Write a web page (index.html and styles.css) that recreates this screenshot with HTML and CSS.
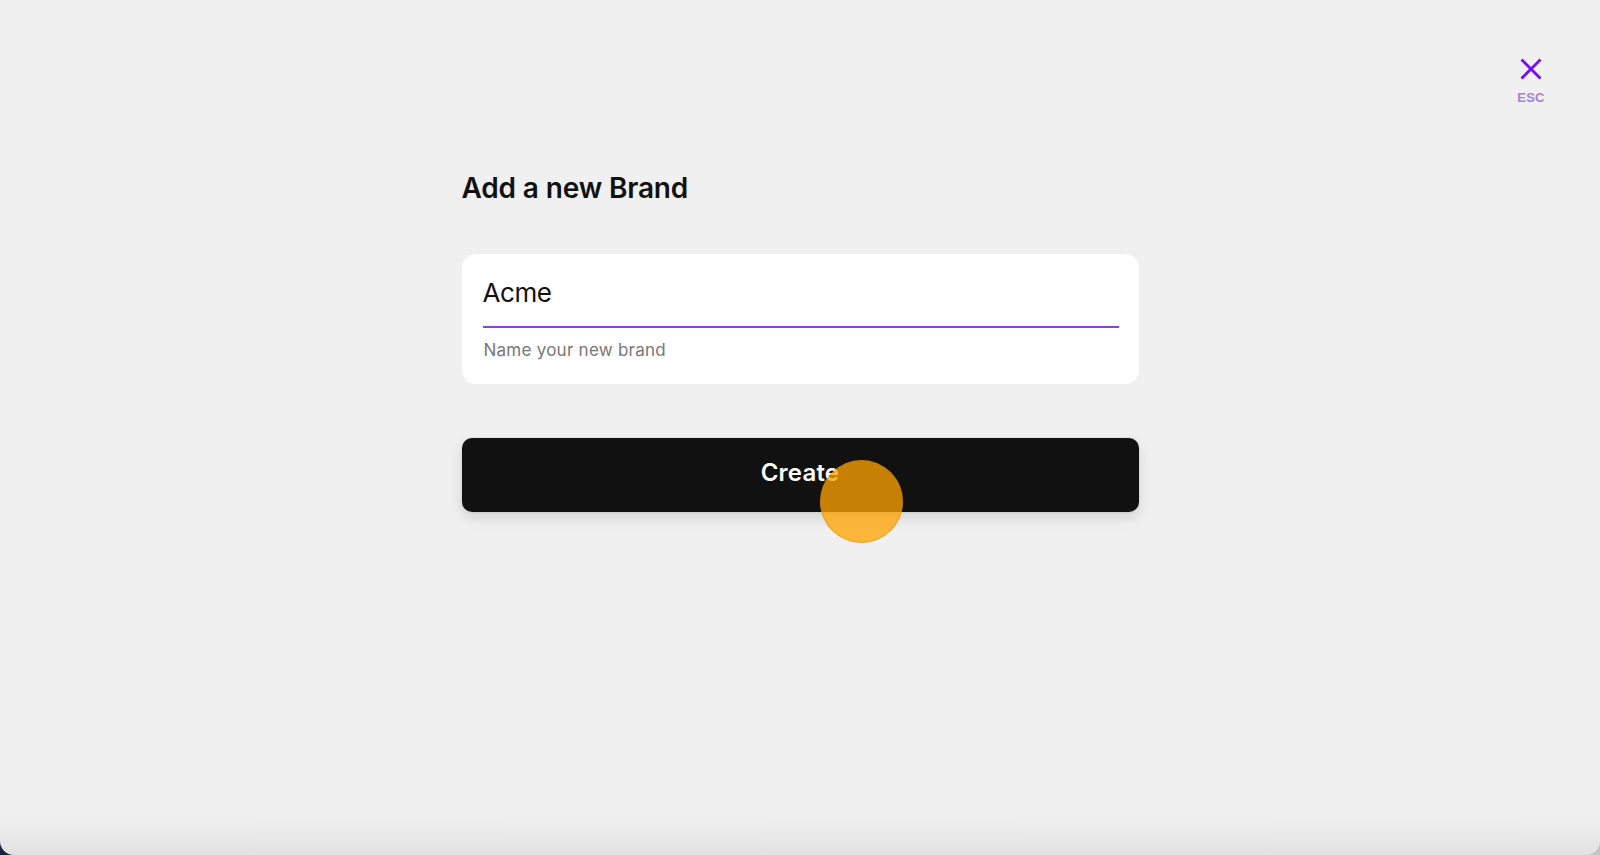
FILE: index.html
```html
<!DOCTYPE html>
<html lang="en">
<head>
<meta charset="utf-8">
<title>Add a new Brand</title>
<link rel="stylesheet" href="styles.css">
</head>
<body>
<div class="screen">
  <header class="topbar">
    <button class="close" type="button" aria-label="Close">
      <svg class="close-icon" width="24" height="24" viewBox="0 0 24 24" aria-hidden="true">
        <path d="M2.5 2.5 L21.5 21.5 M21.5 2.5 L2.5 21.5" fill="none" stroke="currentColor" stroke-width="2.8"/>
      </svg>
      <span class="close-label">ESC</span>
    </button>
  </header>

  <main class="form">
    <h1 class="form-title">Add a new Brand</h1>

    <div class="field-card">
      <div class="field-input">Acme</div>
      <div class="field-hint">Name your new brand</div>
    </div>

    <div class="action">
      <button class="create-btn" type="button">Create</button>
      <span class="cursor-dot"></span>
    </div>
  </main>
</div>
</body>
</html>
```

FILE: styles.css
```css
* {
  box-sizing: border-box;
}

html,
body {
  margin: 0;
  height: 100%;
}

body {
  overflow: hidden;
  font-family: Inter, "Noto Sans", "Liberation Sans", sans-serif;
  color: #111111;
  background: linear-gradient(to right, #17243f 0 50%, #c4c4c4 50% 100%);
}

.screen {
  height: 855px;
  display: flex;
  flex-direction: column;
  border-radius: 0 0 14px 14px;
  background: linear-gradient(to bottom, #f0f0f0 0, #f0f0f0 calc(100% - 42px), #e2e2e2 100%);
}

/* top bar with the close control */
.topbar {
  display: flex;
  justify-content: flex-end;
  padding: 57px 49px 0 0;
}

.close {
  display: flex;
  flex-direction: column;
  align-items: center;
  width: 40px;
  padding: 0;
  border: 0;
  background: none;
  color: #7a0af5;
  cursor: pointer;
}

.close-icon {
  display: block;
}

.close-label {
  margin-top: 9px;
  font-size: 13px;
  line-height: 16px;
  font-weight: 600;
  letter-spacing: 0.2px;
  color: #a283dc;
}

/* centered form column */
.form {
  width: 677px;
  margin: 65px auto 0;
  display: flex;
  flex-direction: column;
}

.form-title {
  margin: 0;
  font-size: 28px;
  line-height: 34px;
  font-weight: 600;
  letter-spacing: -0.15px;
  color: #111111;
}

.field-card {
  margin-top: 49px;
  padding: 23px 20px 23px 21px;
  background: #ffffff;
  border-radius: 14px;
}

.field-input {
  font-size: 26px;
  line-height: 32px;
  font-weight: 400;
  letter-spacing: -0.4px;
  color: #111111;
  padding: 0 0 17px 0;
  border-bottom: 2px solid #8b3cf2;
}

.field-hint {
  margin-top: 12px;
  padding-left: 1px;
  font-size: 17px;
  line-height: 21px;
  letter-spacing: 0.25px;
  color: #777777;
}

.action {
  position: relative;
  margin-top: 54px;
}

.create-btn {
  display: block;
  width: 100%;
  height: 74px;
  padding: 0 0 6px;
  border: 0;
  border-radius: 10px;
  background: #111111;
  color: #ffffff;
  font-family: inherit;
  font-size: 24px;
  font-weight: 600;
  letter-spacing: 0.2px;
  box-shadow: 0 0 0 1px rgba(0, 0, 0, 0.04), 0 6px 14px rgba(0, 0, 0, 0.12);
  cursor: pointer;
}

/* click indicator drawn over the button */
.cursor-dot {
  position: absolute;
  left: 358px;
  top: 22px;
  width: 83px;
  height: 83px;
  border-radius: 50%;
  background: rgba(255, 163, 0, 0.76);
  box-shadow: inset 0 0 0 1px rgba(200, 120, 0, 0.35);
  pointer-events: none;
}
```
